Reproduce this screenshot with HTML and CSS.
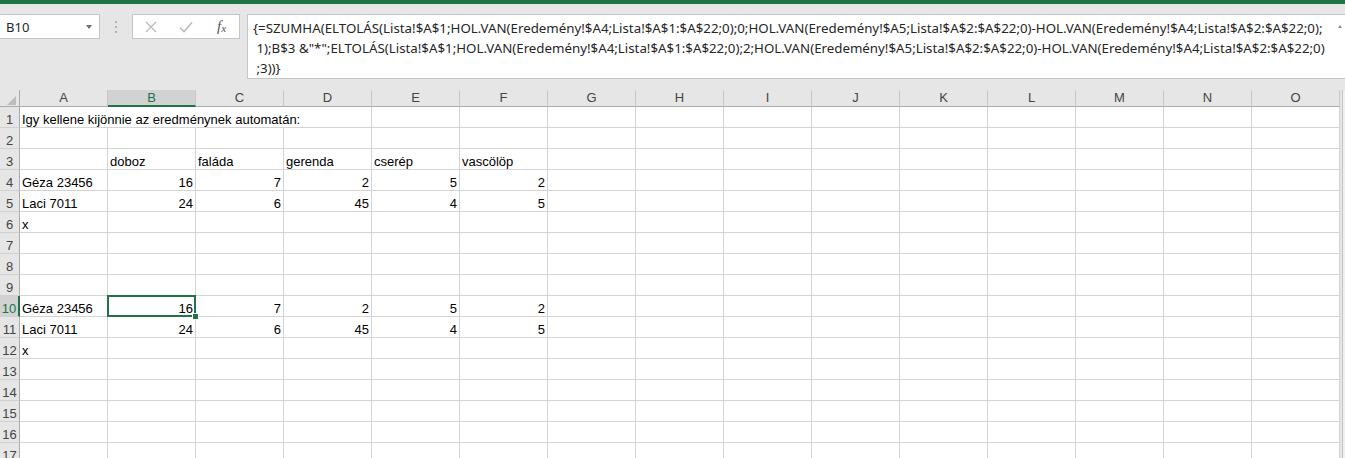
FILE: index.html
```html
<!DOCTYPE html>
<html lang="hu">
<head>
  <meta charset="UTF-8">
  <title>Eredmény - Excel</title>
  <link rel="stylesheet" href="styles.css">
</head>
<body>
  <div class="ribbon-edge"></div>

  <div class="formula-bar">
    <div class="name-box"><span>B10</span><span class="arrow"></span></div>
    <div class="grip"><span></span><span></span><span></span></div>
    <div class="fx-box">
      <svg width="14" height="14" viewBox="0 0 14 14"><path d="M2 2L12 12M12 2L2 12" stroke="#bdbdbd" stroke-width="1.4" fill="none"/></svg>
      <svg width="16" height="14" viewBox="0 0 16 14"><path d="M2 7.5L6 11.5L14 2.5" stroke="#bdbdbd" stroke-width="1.6" fill="none"/></svg>
      <span class="fx">f<sub>x</sub></span>
    </div>
    <div class="formula">
      <div class="line">{=SZUMHA(ELTOLÁS(Lista!$A$1;HOL.VAN(Eredemény!$A4;Lista!$A$1:$A$22;0);0;HOL.VAN(Eredemény!$A5;Lista!$A$2:$A$22;0)-HOL.VAN(Eredemény!$A4;Lista!$A$2:$A$22;0);</div>
      <div class="line"> 1);B$3 &amp;"*";ELTOLÁS(Lista!$A$1;HOL.VAN(Eredemény!$A4;Lista!$A$1:$A$22;0);2;HOL.VAN(Eredemény!$A5;Lista!$A$2:$A$22;0)-HOL.VAN(Eredemény!$A4;Lista!$A$2:$A$22;0)</div>
      <div class="line"> ;3))}</div>
      <span class="expand"></span>
    </div>
  </div>

  <div class="sheet-area">
    <div class="sheet">
      <div class="corner"><svg width="20" height="17" viewBox="0 0 20 17"><polygon points="16,6 16,15 7,15" fill="#bcbcbc"/></svg></div>
      <div class="ch">A</div><div class="ch sel">B</div><div class="ch">C</div><div class="ch">D</div><div class="ch">E</div><div class="ch">F</div><div class="ch">G</div><div class="ch">H</div><div class="ch">I</div><div class="ch">J</div><div class="ch">K</div><div class="ch">L</div><div class="ch">M</div><div class="ch">N</div><div class="ch">O</div>

      <div class="rh">1</div><div class="span4">Igy kellene kijönnie az eredménynek automatán:</div><div></div><div></div><div></div><div></div><div></div><div></div><div></div><div></div><div></div><div></div><div></div>

      <div class="rh">2</div><div></div><div></div><div></div><div></div><div></div><div></div><div></div><div></div><div></div><div></div><div></div><div></div><div></div><div></div><div></div>

      <div class="rh">3</div><div></div><div>doboz</div><div>faláda</div><div>gerenda</div><div>cserép</div><div>vascölöp</div><div></div><div></div><div></div><div></div><div></div><div></div><div></div><div></div><div></div>

      <div class="rh">4</div><div>Géza 23456</div><div class="num">16</div><div class="num">7</div><div class="num">2</div><div class="num">5</div><div class="num">2</div><div></div><div></div><div></div><div></div><div></div><div></div><div></div><div></div><div></div>

      <div class="rh">5</div><div>Laci 7011</div><div class="num">24</div><div class="num">6</div><div class="num">45</div><div class="num">4</div><div class="num">5</div><div></div><div></div><div></div><div></div><div></div><div></div><div></div><div></div><div></div>

      <div class="rh">6</div><div>x</div><div></div><div></div><div></div><div></div><div></div><div></div><div></div><div></div><div></div><div></div><div></div><div></div><div></div><div></div>

      <div class="rh">7</div><div></div><div></div><div></div><div></div><div></div><div></div><div></div><div></div><div></div><div></div><div></div><div></div><div></div><div></div><div></div>

      <div class="rh">8</div><div></div><div></div><div></div><div></div><div></div><div></div><div></div><div></div><div></div><div></div><div></div><div></div><div></div><div></div><div></div>

      <div class="rh">9</div><div></div><div></div><div></div><div></div><div></div><div></div><div></div><div></div><div></div><div></div><div></div><div></div><div></div><div></div><div></div>

      <div class="rh sel">10</div><div>Géza 23456</div><div class="num active">16<span class="handle"></span></div><div class="num">7</div><div class="num">2</div><div class="num">5</div><div class="num">2</div><div></div><div></div><div></div><div></div><div></div><div></div><div></div><div></div><div></div>

      <div class="rh">11</div><div>Laci 7011</div><div class="num">24</div><div class="num">6</div><div class="num">45</div><div class="num">4</div><div class="num">5</div><div></div><div></div><div></div><div></div><div></div><div></div><div></div><div></div><div></div>

      <div class="rh">12</div><div>x</div><div></div><div></div><div></div><div></div><div></div><div></div><div></div><div></div><div></div><div></div><div></div><div></div><div></div><div></div>

      <div class="rh">13</div><div></div><div></div><div></div><div></div><div></div><div></div><div></div><div></div><div></div><div></div><div></div><div></div><div></div><div></div><div></div>

      <div class="rh">14</div><div></div><div></div><div></div><div></div><div></div><div></div><div></div><div></div><div></div><div></div><div></div><div></div><div></div><div></div><div></div>

      <div class="rh">15</div><div></div><div></div><div></div><div></div><div></div><div></div><div></div><div></div><div></div><div></div><div></div><div></div><div></div><div></div><div></div>

      <div class="rh">16</div><div></div><div></div><div></div><div></div><div></div><div></div><div></div><div></div><div></div><div></div><div></div><div></div><div></div><div></div><div></div>

      <div class="rh">17</div><div></div><div></div><div></div><div></div><div></div><div></div><div></div><div></div><div></div><div></div><div></div><div></div><div></div><div></div><div></div>
    </div>
    <div class="vscroll"></div>
  </div>
</body>
</html>
```

FILE: styles.css
```css
body {
  margin: 0;
  width: 1345px;
  height: 458px;
  overflow: hidden;
  background-color: #e6e6e6;
  color: #000;
  font-family: 'Liberation Sans', Arial, sans-serif;
}

.ribbon-edge {
  height: 4px;
  background: #217346;
}

/* formula bar */
.formula-bar {
  display: flex;
  align-items: flex-start;
  margin-top: 10px;
  height: 65px;
}

.name-box {
  box-sizing: border-box;
  width: 100px;
  height: 25px;
  display: flex;
  align-items: center;
  justify-content: space-between;
  padding: 0 6px;
  background: #fff;
  border: 1px solid #c6c6c6;
  border-left: none;
  font-family: 'Noto Sans', sans-serif;
  font-size: 13px;
  color: #262626;
}

.name-box .arrow {
  width: 0;
  height: 0;
  margin-right: 1px;
  border-left: 3.5px solid transparent;
  border-right: 3.5px solid transparent;
  border-top: 4px solid #6f6f6f;
}

.grip {
  width: 32px;
  height: 25px;
  display: flex;
  flex-direction: column;
  align-items: center;
  justify-content: center;
  gap: 3px;
}

.grip span {
  width: 2px;
  height: 2px;
  background: #b4b4b4;
}

.fx-box {
  box-sizing: border-box;
  width: 108px;
  height: 25px;
  display: grid;
  grid-template-columns: 35px 36px 35px;
  align-items: center;
  justify-items: center;
  background: #fff;
  border: 1px solid #c6c6c6;
}

.fx {
  font-family: 'Liberation Serif', serif;
  font-style: italic;
  font-size: 15px;
  color: #555;
  line-height: 1;
}

.fx sub {
  font-size: 11px;
  vertical-align: -1px;
}

.formula {
  position: relative;
  box-sizing: border-box;
  flex: 1;
  height: 65px;
  margin-left: 7px;
  padding: 3px 0 0 5px;
  background: #fff;
  border: 1px solid #c6c6c6;
  border-right: none;
  font-family: 'Noto Sans', sans-serif;
  font-size: 13.3px;
  line-height: 20px;
  color: #262626;
  overflow: hidden;
}

.formula .line {
  white-space: pre;
}

.formula .expand {
  position: absolute;
  right: 3px;
  top: 10px;
  width: 0;
  height: 0;
  border-left: 2.5px solid transparent;
  border-right: 2.5px solid transparent;
  border-bottom: 3px solid #8a8a8a;
}

/* grid */
.sheet-area {
  display: flex;
  margin-top: 11px;
}

.sheet {
  display: grid;
  grid-template-columns: 20px repeat(15, 88px);
  grid-template-rows: 17px;
  grid-auto-rows: 21px;
  font-size: 13px;
}

.sheet > div {
  box-sizing: border-box;
  padding: 5px 2px 0;
  line-height: 15px;
  white-space: nowrap;
  background: #fff;
  border-right: 1px solid #d4d4d4;
  border-bottom: 1px solid #d4d4d4;
}

.sheet > .span4 {
  grid-column: span 4;
}

.sheet > .num {
  text-align: right;
}

.sheet > .corner {
  padding: 0;
  background: #e6e6e6;
  border-right: 1px solid #ababab;
  border-bottom: 1px solid #ababab;
}

.sheet > .ch {
  padding: 0;
  text-align: center;
  line-height: 16px;
  color: #444;
  background: #e6e6e6;
  border-right: 1px solid #c8c8c8;
  border-bottom: 1px solid #ababab;
}

.sheet > .ch.sel {
  background: #d2d2d2;
  color: #217346;
  border-bottom: 2px solid #217346;
}

.sheet > .rh {
  padding: 5px 0 0;
  text-align: center;
  color: #444;
  background: #e6e6e6;
  border-right: 1px solid #ababab;
  border-bottom: 1px solid #d0d0d0;
}

.sheet > .rh.sel {
  background: #d2d2d2;
  color: #217346;
  border-right: 2px solid #217346;
}

/* active cell B10 */
.sheet > .active {
  position: relative;
}

.sheet > .active::after {
  content: "";
  position: absolute;
  top: -1px;
  left: -1px;
  right: -1px;
  bottom: -1px;
  border: 2px solid #217346;
}

.handle {
  position: absolute;
  right: -4px;
  bottom: -4px;
  width: 5px;
  height: 5px;
  background: #217346;
  border: 1px solid #fff;
  z-index: 1;
}

.vscroll {
  flex: 1;
  margin-left: 2px;
  background: #f0f0f0;
  border-left: 1px solid #c6c6c6;
}
```
